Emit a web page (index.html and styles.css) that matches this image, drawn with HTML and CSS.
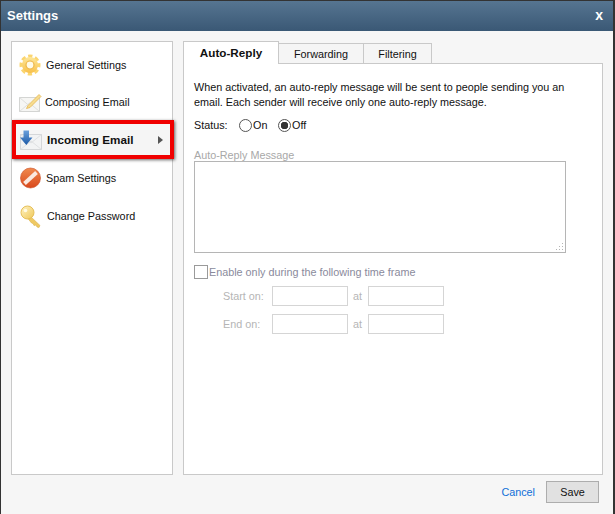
FILE: index.html
```html
<!DOCTYPE html>
<html lang="en">
<head>
<meta charset="utf-8">
<title>Settings</title>
<link rel="stylesheet" href="styles.css">
</head>
<body>
<div class="dialog">
  <header class="titlebar">
    <span class="title">Settings</span>
    <span class="close">x</span>
  </header>
  <div class="content">
    <nav class="sidebar">
      <div class="nav-item">
        <svg class="nav-icon" viewBox="0 0 24 24" width="24" height="24">
          <defs>
            <linearGradient id="gear" x1="0" y1="0" x2="0" y2="1"><stop offset="0" stop-color="#fde79a"/><stop offset="1" stop-color="#f8c04a"/></linearGradient>
            <linearGradient id="arrow" x1="0" y1="0" x2="0" y2="1"><stop offset="0" stop-color="#6aa0dc"/><stop offset="1" stop-color="#1c5aa6"/></linearGradient>
            <linearGradient id="spam" x1="0" y1="0" x2="0" y2="1"><stop offset="0" stop-color="#f08a4e"/><stop offset="1" stop-color="#d9481c"/></linearGradient>
            <linearGradient id="keyfill" x1="0" y1="0" x2="1" y2="1"><stop offset="0" stop-color="#fff3c4"/><stop offset="1" stop-color="#efc858"/></linearGradient>
          </defs>
          <circle cx="11" cy="12" r="8.800" fill="none" stroke="#fbd56f" stroke-width="3.400" stroke-dasharray="4.200 2.710" stroke-dashoffset="2.100"/>
          <circle cx="11" cy="12" r="8" fill="url(#gear)"/>
          <circle cx="11" cy="12" r="4" fill="#fffbe8" stroke="#eeb748" stroke-width="1.200"/>
        </svg>
        <span class="nav-label">General Settings</span>
      </div>
      <div class="nav-item">
        <svg class="nav-icon" viewBox="0 0 24 24" width="24" height="24">
          <rect x=".5" y="7.500" width="20" height="14" fill="#f6f6f4" stroke="#d4d5d3"/>
          <path d="M.5 21.500 10.500 13l10 8.500M.5 7.500l10 8.500 10-8.500" fill="none" stroke="#dedfdd"/>
          <path d="M9 15.500 20 4.500l2 2-11 11-3.500 1z" fill="#f7dc8e" stroke="#e3b654" stroke-width=".8"/>
        </svg>
        <span class="nav-label composing">Composing Email</span>
      </div>
      <div class="nav-item active">
        <svg class="nav-icon" viewBox="0 0 24 24" width="24" height="24">
          <rect x="1.500" y="6.500" width="21" height="15" fill="#f2f3f4" stroke="#d5d7d9"/>
          <path d="M1.500 21.500 12 13l10.500 8.500M1.500 6.500 12 15l10.500-8.500" fill="none" stroke="#dfe1e3"/>
          <path d="M4.500 2.500h5.500v7h3.500L7.300 17 1 9.500h3.500z" fill="url(#arrow)"/>
        </svg>
        <span class="nav-label">Incoming Email</span>
        <span class="arrow"></span>
      </div>
      <div class="nav-item">
        <svg class="nav-icon" viewBox="0 0 24 24" width="24" height="24">
          <circle cx="11.500" cy="12" r="10" fill="url(#spam)" stroke="#c9481f" stroke-width=".6"/>
          <path d="M5.500 17.500 17.500 6.500" stroke="#fbe9df" stroke-width="4" stroke-linecap="butt"/>
        </svg>
        <span class="nav-label">Spam Settings</span>
      </div>
      <div class="nav-item">
        <svg class="nav-icon" viewBox="0 0 24 24" width="24" height="24">
          <path d="M10 11 21 21.500l-1 2-2-.5-1-2-2 .5-1-2-1.500-.5-4-5z" fill="#efc963" stroke="#dcb24a" stroke-width=".6"/>
          <circle cx="8.500" cy="8.500" r="6.500" fill="url(#keyfill)" stroke="#e6bf58"/>
          <circle cx="6.500" cy="6.500" r="1.800" fill="#fffbe6"/>
        </svg>
        <span class="nav-label change">Change Password</span>
      </div>
    </nav>
    <main class="main">
      <div class="tabs">
        <div class="tab selected">Auto-Reply</div>
        <div class="tab forwarding">Forwarding</div>
        <div class="tab filtering">Filtering</div>
      </div>
      <section class="panel">
        <p class="intro">When activated, an auto-reply message will be sent to people sending you an<br>email. Each sender will receive only one auto-reply message.</p>
        <div class="status">
          <span class="status-label">Status:</span>
          <span class="radio"></span><span class="radio-text on">On</span>
          <span class="radio checked"></span><span class="radio-text">Off</span>
        </div>
        <div class="message-label">Auto-Reply Message</div>
        <div class="textarea">
          <svg class="grip" width="9" height="9" viewBox="0 0 9 9"><path d="M7 1h1v1H7zM4 4h1v1H4zM7 4h1v1H7zM1 7h1v1H1zM4 7h1v1H4zM7 7h1v1H7z" fill="#b5b5b5"/></svg>
        </div>
        <div class="enable">
          <span class="checkbox"></span>
          <span class="enable-text">Enable only during the following time frame</span>
        </div>
        <div class="time-row">
          <span class="time-label">Start on:</span><span class="field"></span><span class="at">at</span><span class="field"></span>
        </div>
        <div class="time-row">
          <span class="time-label">End on:</span><span class="field"></span><span class="at">at</span><span class="field"></span>
        </div>
      </section>
    </main>
  </div>
  <footer class="footer">
    <a class="cancel">Cancel</a>
    <button class="save">Save</button>
  </footer>
</div>
</body>
</html>
```
FILE: styles.css
```css
* { box-sizing: border-box; }
html, body { margin: 0; padding: 0; }
body {
  width: 615px;
  height: 514px;
  overflow: hidden;
  background: #333;
  font-family: "Liberation Sans", Arial, sans-serif;
  font-size: 10.800px;
  color: #111;
}
.dialog {
  margin: 1px 2px 0 1px;
  height: 513px;
  display: flex;
  flex-direction: column;
  background: #f6f6f6;
}
.titlebar {
  height: 30px;
  flex: none;
  display: flex;
  align-items: center;
  justify-content: space-between;
  padding: 0 10px 2px 6px;
  background: linear-gradient(#567591, #3a5875);
  color: #fff;
  font-weight: 700;
}
.title { font-size: 13px; }
.close { font-size: 14px; line-height: 13px; }
.content {
  flex: 1;
  min-height: 0;
  display: flex;
  gap: 10px;
  padding: 10px 10px 0;
}
.sidebar {
  width: 162px;
  height: 434px;
  flex: none;
  padding-top: 3px;
  background: #fff;
  border: 1px solid #c9c9c9;
}
.nav-item {
  height: 38px;
  display: flex;
  align-items: center;
  padding-left: 7px;
  gap: 3px;
}
.nav-item:first-child { padding-top: 2px; }
.nav-icon { flex: none; }
.nav-label { white-space: nowrap; }
.composing { margin-left: -1px; }
.change { margin-left: 1px; }
.nav-item.active {
  height: 39px;
  margin: -1px -2px 0 0;
  padding-left: 3px;
  gap: 4px;
  background: #f5f5f5;
  border: 4px solid #f00000;
  box-shadow: 1px 1px 3px rgba(0, 0, 0, .6);
  font-size: 11.700px;
  font-weight: 700;
  position: relative;
}
.arrow {
  margin-left: auto;
  margin-right: 7px;
  border-left: 5px solid #555;
  border-top: 4px solid transparent;
  border-bottom: 4px solid transparent;
}
.main {
  width: 420px;
  height: 434px;
  flex: none;
  display: flex;
  flex-direction: column;
}
.tabs {
  height: 23px;
  flex: none;
  display: flex;
  align-items: flex-end;
  margin-bottom: -1px;
  position: relative;
}
.tab {
  height: 21px;
  display: flex;
  align-items: center;
  justify-content: center;
  background: #f5f5f5;
  border: 1px solid #c9c9c9;
  border-left-width: 0;
  border-bottom-color: #c9c9c9;
}
.tab.selected {
  width: 96px;
  height: 23px;
  padding-bottom: 2px;
  background: #fff;
  border-width: 1px 1px 0;
  font-size: 11.700px;
  font-weight: 700;
}
.forwarding { width: 85px; }
.filtering { width: 68px; }
.panel {
  flex: 1;
  min-height: 0;
  background: #fff;
  border: 1px solid #c9c9c9;
  padding: 16px 10px 0;
}
.intro { margin: 0; white-space: nowrap; line-height: 15px; }
.status {
  display: flex;
  align-items: center;
  height: 16px;
  margin-top: 7px;
}
.status-label { width: 45px; }
.radio {
  width: 13px;
  height: 13px;
  border: 1px solid #555;
  border-radius: 50%;
  background: #fff;
  flex: none;
}
.radio.checked {
  background: radial-gradient(circle, #333 0 3.500px, #fff 4px);
}
.radio-text.on { width: 25px; margin-left: 1px; }
.radio-text { margin-left: 1px; }
.message-label { margin-top: 15px; color: #a8a8a8; line-height: 15px; }
.textarea {
  width: 372px;
  height: 92px;
  margin-top: -2px;
  border: 1px solid #b5b5b5;
  position: relative;
}
.grip { position: absolute; right: 1px; bottom: 1px; }
.enable {
  display: flex;
  align-items: center;
  height: 16px;
  margin-top: 11px;
}
.checkbox {
  width: 14px;
  height: 14px;
  flex: none;
  border: 1px solid #9a9a9a;
  margin-right: 1px;
}
.enable-text { color: #8a8a9c; }
.time-row {
  display: flex;
  align-items: center;
  height: 20px;
  margin-top: 8px;
  padding-left: 29px;
  color: #b5b5b5;
}
.enable + .time-row { margin-top: 6px; }
.time-label { width: 49px; }
.at { width: 20px; padding-left: 5px; }
.field {
  width: 76px;
  height: 20px;
  border: 1px solid #d5d5d5;
  background: #fff;
}
.footer {
  height: 39px;
  flex: none;
  display: flex;
  justify-content: flex-end;
  align-items: center;
  gap: 11px;
  padding: 0 14px 5px 0;
}
.cancel { color: #0f6fd8; }
.save {
  width: 53px;
  height: 22px;
  padding: 0;
  background: #e1e1e1;
  border: 1px solid #adadad;
  font: inherit;
  color: #111;
}
```
